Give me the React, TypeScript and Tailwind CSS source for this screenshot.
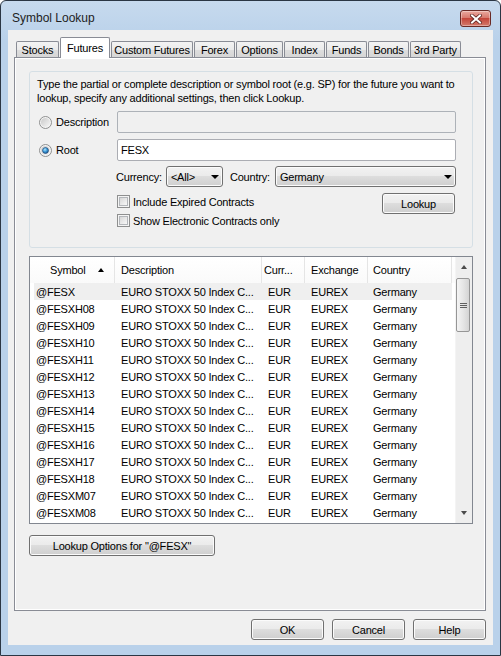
import React from "react";

const btnFace =
  "bg-[linear-gradient(#f2f2f2_0%,#ebebeb_45%,#dddddd_50%,#cfcfcf_100%)] border border-[#707070] rounded-[3px] shadow-[inset_0_0_0_1px_#fbfbfb]";

const tabs = [
  { label: "Stocks", w: "w-[43px]" },
  { label: "Futures", w: "w-[50px]", selected: true },
  { label: "Custom Futures", w: "w-[82px]" },
  { label: "Forex", w: "w-[41px]" },
  { label: "Options", w: "w-[47px]" },
  { label: "Index", w: "w-[41px]" },
  { label: "Funds", w: "w-[41px]" },
  { label: "Bonds", w: "w-[41px]" },
  { label: "3rd Party", w: "w-[51px]" },
];

const symbols = [
  "@FESX",
  "@FESXH08",
  "@FESXH09",
  "@FESXH10",
  "@FESXH11",
  "@FESXH12",
  "@FESXH13",
  "@FESXH14",
  "@FESXH15",
  "@FESXH16",
  "@FESXH17",
  "@FESXH18",
  "@FESXM07",
  "@FESXM08",
];

function Button({
  children,
  className = "",
  focused = false,
}: {
  children: React.ReactNode;
  className?: string;
  focused?: boolean;
}) {
  return (
    <div
      className={`flex h-[21px] items-center justify-center ${btnFace} ${
        focused ? "border-[#3c7fb1] shadow-[inset_0_0_0_1px_#8ad8f6]" : ""
      } ${className}`}
    >
      {children}
    </div>
  );
}

function Radio({ checked = false }: { checked?: boolean }) {
  return (
    <svg width="13" height="13" viewBox="0 0 13 13" className="shrink-0">
      <defs>
        <linearGradient id="radioFill" x1="0" y1="0" x2="1" y2="1">
          <stop offset="0" stopColor="#c9c9c9" />
          <stop offset="1" stopColor="#f7f7f7" />
        </linearGradient>
        <radialGradient id="radioDot" cx="0.4" cy="0.35" r="0.7">
          <stop offset="0" stopColor="#b6e6fb" />
          <stop offset="0.5" stopColor="#3c9ad8" />
          <stop offset="1" stopColor="#1a4f86" />
        </radialGradient>
      </defs>
      <circle cx="6.5" cy="6.5" r="6" fill="#f4f4f4" stroke="#8e8f8f" />
      <circle cx="6.5" cy="6.5" r="4.6" fill="url(#radioFill)" />
      {checked && (
        <circle cx="6.5" cy="6.5" r="3" fill="url(#radioDot)" stroke="#1b4575" strokeWidth="0.6" />
      )}
    </svg>
  );
}

function Checkbox() {
  return (
    <span className="block h-[13px] w-[13px] shrink-0 border border-[#8e8f8f] bg-[#f4f4f4] p-[1px]">
      <span className="block h-full w-full border border-[#b3b6ba] bg-[linear-gradient(135deg,#d7d7d7,#f8f8f8)]" />
    </span>
  );
}

function Combo({ value, className = "" }: { value: string; className?: string }) {
  return (
    <div className={`flex h-[21px] items-center justify-between pl-[4px] pr-[3px] ${btnFace} ${className}`}>
      <span>{value}</span>
      <span className="h-0 w-0 border-x-[4px] border-t-[4px] border-x-transparent border-t-black" />
    </div>
  );
}

function CloseButton() {
  return (
    <div className="mt-[9px] flex h-[17px] w-[31px] items-center justify-center rounded-[3px] border border-[#6a2a25] bg-[linear-gradient(#eaa99f_0%,#d8796d_45%,#c4463a_50%,#d47a6c_100%)] shadow-[inset_0_0_0_1px_rgba(255,255,255,0.35)]">
      <svg width="12" height="10" viewBox="0 0 12 10">
        <path d="M2 1.5 L10 8.5 M10 1.5 L2 8.5" stroke="#5b2420" strokeWidth="3.6" strokeLinecap="square" />
        <path d="M2 1.5 L10 8.5 M10 1.5 L2 8.5" stroke="#ffffff" strokeWidth="2" strokeLinecap="square" />
      </svg>
    </div>
  );
}

export default function App() {
  return (
    <div className="flex h-[656px] w-[501px] flex-col overflow-hidden rounded-t-[6px] border border-[#2b3644] bg-[linear-gradient(#c7daee,#b9d1ea_40px)] font-['Liberation_Sans',Arial,sans-serif] text-[11px] leading-[14px] text-black">
      {/* title bar */}
      <div className="flex h-[29px] shrink-0 items-start justify-between pl-[11px] pr-[9px]">
        <span className="mt-[10px] text-[12px] leading-[15px] text-[#1e1e1e]">Symbol Lookup</span>
        <CloseButton />
      </div>

      {/* client */}
      <div className="mx-[7px] mb-[10px] flex flex-1 flex-col bg-[#f0f0f0] pl-[6px] pr-[7px] tracking-[-0.2px]">
        <div className="relative z-10 -mb-px flex h-[28px] items-end gap-[1px] pl-[2px]">
          {tabs.map((t) =>
            t.selected ? (
              <div
                key={t.label}
                className={`${t.w} flex h-[21px] items-center justify-center rounded-t-[2px] border border-b-0 border-[#898c95] bg-white pb-[1px]`}
              >
                {t.label}
              </div>
            ) : (
              <div
                key={t.label}
                className={`${t.w} mb-[1px] flex h-[16px] items-center justify-center rounded-t-[2px] border border-b-0 border-[#898c95] bg-[linear-gradient(#f3f3f3_0%,#ebebeb_50%,#dedede_50%,#d6d6d6_100%)]`}
              >
                {t.label}
              </div>
            )
          )}
        </div>

        <div className="flex h-[554px] shrink-0 flex-col border border-[#898c95] pl-[14px] pr-[12px] pt-[13px] shadow-[inset_1px_1px_0_#fff,inset_-1px_-1px_0_#fff]">
          {/* group box */}
          <div className="h-[177px] shrink-0 rounded-[3px] border border-[#d5dfe5]">
            <p className="mt-[5px] pl-[7px]">
              Type the partial or complete description or symbol root (e.g. SP) for the future you want to
              <br />
              lookup, specify any additional settings, then click Lookup.
            </p>

            <div className="mt-[6px] flex h-[22px] items-center pl-[9px] pr-[16px]">
              <div className="flex w-[78px] items-center gap-[4px]">
                <Radio />
                <span>Description</span>
              </div>
              <div className="h-full flex-1 rounded-[2px] border border-[#adb2b8] bg-[#f0f0f0]" />
            </div>

            <div className="mt-[6px] flex h-[22px] items-center pl-[9px] pr-[16px]">
              <div className="flex w-[78px] items-center gap-[4px]">
                <Radio checked />
                <span>Root</span>
              </div>
              <div className="flex h-full flex-1 items-center rounded-[2px] border border-[#abadb3] bg-white pl-[3px]">
                FESX
              </div>
            </div>

            <div className="mt-[5px] flex h-[21px] items-center pl-[86px] pr-[16px]">
              <span>Currency:</span>
              <Combo value="<All>" className="ml-[4px] w-[57px]" />
              <span className="ml-[7px]">Country:</span>
              <Combo value="Germany" className="ml-[5px] flex-1" />
            </div>

            <div className="mt-[6px] flex pl-[87px] pr-[17px]">
              <div className="flex flex-col gap-[2px]">
                <label className="flex h-[17px] items-center gap-[3px]">
                  <Checkbox />
                  <span>Include Expired Contracts</span>
                </label>
                <label className="flex h-[17px] items-center gap-[3px]">
                  <Checkbox />
                  <span>Show Electronic Contracts only</span>
                </label>
              </div>
              <Button className="ml-auto w-[73px]">Lookup</Button>
            </div>
          </div>

          {/* list view */}
          <div className="mt-[8px] flex h-[268px] shrink-0 border border-[#828790] bg-white">
            <div className="flex flex-1 flex-col">
              <div className="flex h-[26px] items-center bg-[linear-gradient(#ffffff,#fafafa)]">
                <div className="flex h-full w-[85px] items-center border-r border-[#e5e5e5] pl-[20px]">
                  <span>Symbol</span>
                  <span className="ml-[13px] h-0 w-0 border-x-[3.5px] border-b-[4px] border-x-transparent border-b-black" />
                </div>
                <div className="flex h-full w-[147px] items-center border-r border-[#e5e5e5] pl-[6px]">Description</div>
                <div className="flex h-full w-[43px] items-center border-r border-[#e5e5e5] pl-[2px]">Curr...</div>
                <div className="flex h-full w-[63px] items-center border-r border-[#e5e5e5] pl-[6px]">Exchange</div>
                <div className="flex h-full w-[84px] items-center border-r border-[#e5e5e5] pl-[5px]">Country</div>
              </div>
              {symbols.map((s, i) => (
                <div
                  key={s}
                  className={`ml-[4px] flex h-[17px] w-[418px] items-center ${i === 0 ? "bg-[#efefef]" : ""}`}
                >
                  <span className="w-[81px] pl-[2px]">{s}</span>
                  <span className="w-[147px] pl-[6px]">EURO STOXX 50 Index C...</span>
                  <span className="w-[43px] pl-[6px]">EUR</span>
                  <span className="w-[63px] pl-[6px]">EUREX</span>
                  <span className="w-[84px] pl-[5px]">Germany</span>
                </div>
              ))}
            </div>

            {/* scrollbar */}
            <div className="flex w-[17px] flex-col border-l border-[#f4f4f4] bg-[#eeeeee]">
              <div className="flex h-[20px] items-center justify-center">
                <span className="h-0 w-0 border-x-[3.5px] border-b-[4px] border-x-transparent border-b-[#4a4a4a]" />
              </div>
              <div className="mt-[1px] flex h-[54px] w-[14px] flex-col items-center justify-center gap-[1px] rounded-[2px] border border-[#969696] bg-[linear-gradient(to_right,#f4f4f4,#e6e6e6_50%,#d4d4d4)]">
                <span className="h-px w-[7px] bg-[#5f5f5f]" />
                <span className="h-px w-[7px] bg-[#5f5f5f]" />
                <span className="h-px w-[7px] bg-[#5f5f5f]" />
              </div>
              <div className="flex-1" />
              <div className="flex h-[20px] items-start justify-center pt-[8px]">
                <span className="h-0 w-0 border-x-[3.5px] border-t-[4px] border-x-transparent border-t-[#4a4a4a]" />
              </div>
            </div>
          </div>

          <Button className="mt-[11px] w-[186px]">Lookup Options for "@FESX"</Button>
        </div>

        <div className="mt-[8px] flex justify-end gap-[8px]">
          <Button focused className="w-[73px]">OK</Button>
          <Button className="w-[73px]">Cancel</Button>
          <Button className="w-[73px]">Help</Button>
        </div>
      </div>
    </div>
  );
}
